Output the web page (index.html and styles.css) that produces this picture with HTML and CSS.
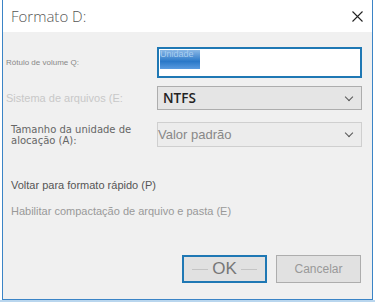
FILE: index.html
```html
<!DOCTYPE html>
<html lang="pt-BR">
<head>
  <meta charset="UTF-8" />
  <title>Formato D:</title>
  <link rel="stylesheet" href="styles.css">
</head>
<body>
  <div class="dialog">
    <div class="titlebar">
      <span class="title">Formato D:</span>
      <svg class="close" width="11" height="11" viewBox="0 0 11 11">
        <path d="M0.5 0.5 L10.5 10.5 M10.5 0.5 L0.5 10.5" stroke="#222" stroke-width="1.1" fill="none"/>
      </svg>
    </div>

    <div class="content">
      <div class="form">
        <div class="row row-label">
          <span class="lbl lbl-tiny">Rótulo de volume Q:</span>
          <div class="textbox"><span class="sel">Unidade</span></div>
        </div>
        <div class="row row-fs">
          <span class="lbl lbl-faint">Sistema de arquivos (E:</span>
          <div class="combo"><span class="combo-text">NTFS</span><span class="chev"></span></div>
        </div>
        <div class="row row-size">
          <span class="lbl lbl-size">Tamanho da unidade de<br>alocação (A):</span>
          <div class="combo combo-off"><span class="combo-text">Valor padrão</span><span class="chev"></span></div>
        </div>
      </div>

      <div class="option opt-quick">Voltar para formato rápido (P)</div>
      <div class="option opt-compress">Habilitar compactação de arquivo e pasta (E)</div>

      <div class="buttons">
        <button class="btn btn-ok"><span class="dash"></span>OK<span class="dash"></span></button>
        <button class="btn btn-cancel">Cancelar</button>
      </div>
    </div>
  </div>
  <div class="desk"></div>
</body>
</html>
```

FILE: styles.css
```css
body {
  margin: 0;
  background: #fff;
  font-family: "Liberation Sans", Arial, sans-serif;
  width: 375px;
  height: 302px;
  overflow: hidden;
}

.dialog {
  margin-left: 2px;
  width: 369px;
  height: 299px;
  border-left: 1px solid #3b84c6;
  border-right: 1px solid #3b84c6;
  border-bottom: 1px solid #3b84c6;
  background: #f0f0f0;
  display: flex;
  flex-direction: column;
}

.titlebar {
  height: 32px;
  background: #fff;
  display: flex;
  align-items: center;
  justify-content: space-between;
  padding: 0 9px 0 8px;
}

.title {
  font-family: "Open Sans", sans-serif;
  font-weight: 300;
  font-size: 15px;
  color: #555;
}

.close {
  margin-top: 1px;
}

.content {
  flex: 1;
  display: flex;
  flex-direction: column;
}

.form {
  margin-top: 15px;
  display: flex;
  flex-direction: column;
}

.row {
  display: grid;
  grid-template-columns: 154px 205px;
  align-items: center;
}

.lbl {
  padding-left: 3px;
}

.lbl-tiny {
  font-size: 8px;
  color: #888;
}

.lbl-faint {
  font-size: 11px;
  color: #c8c8c8;
}

.lbl-size {
  font-family: "DejaVu Sans", sans-serif;
  font-size: 10px;
  line-height: 11px;
  color: #666;
  padding-left: 8px;
  align-self: start;
  margin-top: 2px;
}

.textbox {
  height: 26px;
  border: 2px solid #1f78b4;
  background: #fff;
  padding: 1px 0 0 1px;
}

.sel {
  display: inline-block;
  width: 40px;
  height: 19px;
  background: linear-gradient(#8ab8e6, #2a78c8 60%, #5a9be0);
  color: #a9cdef;
  font-size: 9px;
  line-height: 9px;
  overflow: hidden;
}

.row-fs {
  margin-top: 8px;
}

.row-size {
  margin-top: 12px;
}

.combo {
  height: 22px;
  border: 1px solid #adadad;
  background: #e5e5e5;
  display: flex;
  align-items: center;
  justify-content: space-between;
  padding: 0 9px 0 5px;
}

.combo-text {
  font-family: "Open Sans", sans-serif;
  font-size: 13.5px;
  font-weight: 600;
  color: #222;
}

.combo-off {
  height: 23px;
  border-color: #cfcfcf;
  background: #ececec;
  padding-left: 0;
}

.combo-off .combo-text {
  font-family: "Liberation Sans", Arial, sans-serif;
  font-weight: normal;
  font-size: 13px;
  color: #888;
}

.chev {
  width: 5px;
  height: 5px;
  border-right: 1px solid #555;
  border-bottom: 1px solid #555;
  transform: rotate(45deg);
  margin-bottom: 3px;
}

.option {
  padding-left: 8px;
  font-size: 11px;
}

.opt-quick {
  margin-top: 32px;
  color: #555;
}

.opt-compress {
  margin-top: 14px;
  color: #999;
}

.buttons {
  margin-top: auto;
  margin-bottom: 16px;
  display: flex;
  justify-content: flex-end;
  gap: 9px;
  padding-right: 11px;
}

.btn {
  width: 85px;
  height: 28px;
  font-family: "Liberation Sans", Arial, sans-serif;
  background: #e1e1e1;
  border: 1px solid #adadad;
  display: flex;
  align-items: center;
  justify-content: center;
  padding: 0;
}

.btn-ok {
  border: 2px solid #1f78b4;
  font-size: 17px;
  color: #777;
  gap: 4px;
}

.dash {
  width: 16px;
  height: 0;
  border-top: 1px solid #c4c4c4;
}

.btn-cancel {
  font-size: 12px;
  color: #999;
}

.desk {
  height: 2px;
  background: #b9d6ee;
}
```
